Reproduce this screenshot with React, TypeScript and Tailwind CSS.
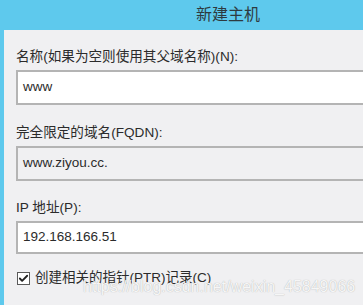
import { Check } from 'lucide-react'

const font = "font-['Liberation_Sans','Noto_Sans_CJK_SC',sans-serif]"

function Field({
    label,
    value,
    readOnly,
    height,
}: {
    label: string
    value: string
    readOnly?: boolean
    height: string
}) {
    return (
        <div className="flex flex-col gap-[4px]">
            <label className="h-[18px] text-[13.6px] leading-[18px] text-[#2b2b2b]">{label}</label>
            <div
                className={`flex w-[400px] items-center border-2 border-[#b4b4b4] px-[5px] text-[13.5px] text-[#2b2b2b] ${height} ${
                    readOnly ? 'bg-[#f0f0f2]' : 'bg-white'
                }`}
            >
                {value}
            </div>
        </div>
    )
}

export default function App() {
    return (
        <div className={`relative flex h-[305px] w-[363px] flex-col overflow-hidden bg-[#5ec9ed] ${font}`}>
            <header className="flex h-[30px] items-center pl-[196px] text-[16px] text-[#2e3a40]">
                新建主机
            </header>

            <section className="ml-[4px] flex flex-1 flex-col bg-[#f0f0f2] pl-[12px] pt-[18px]">
                <Field label="名称(如果为空则使用其父域名称)(N):" value="www" height="h-[35px]" />
                <div className="mt-[19px]">
                    <Field label="完全限定的域名(FQDN):" value="www.ziyou.cc." readOnly height="h-[35px]" />
                </div>
                <div className="mt-[18px]">
                    <Field label="IP 地址(P):" value="192.168.166.51" height="h-[33px]" />
                </div>

                <div className="mt-[15px] flex items-center gap-[5px] pl-[1px]">
                    <span className="flex h-[13px] w-[13px] items-center justify-center border border-[#5a5a5a] bg-white">
                        <Check className="h-[11px] w-[11px] text-[#222]" strokeWidth={4} />
                    </span>
                    <span className="text-[13.5px] leading-[18px] text-[#2b2b2b]">创建相关的指针(PTR)记录(C)</span>
                </div>
            </section>

            <span className="absolute left-[83px] top-[277px] text-[16px] leading-[20px] text-[#f6f6f6] [text-shadow:0_0_1px_#a8a8a8]">
                https://blog.csdn.net/weixin_45849066
            </span>
        </div>
    )
}
